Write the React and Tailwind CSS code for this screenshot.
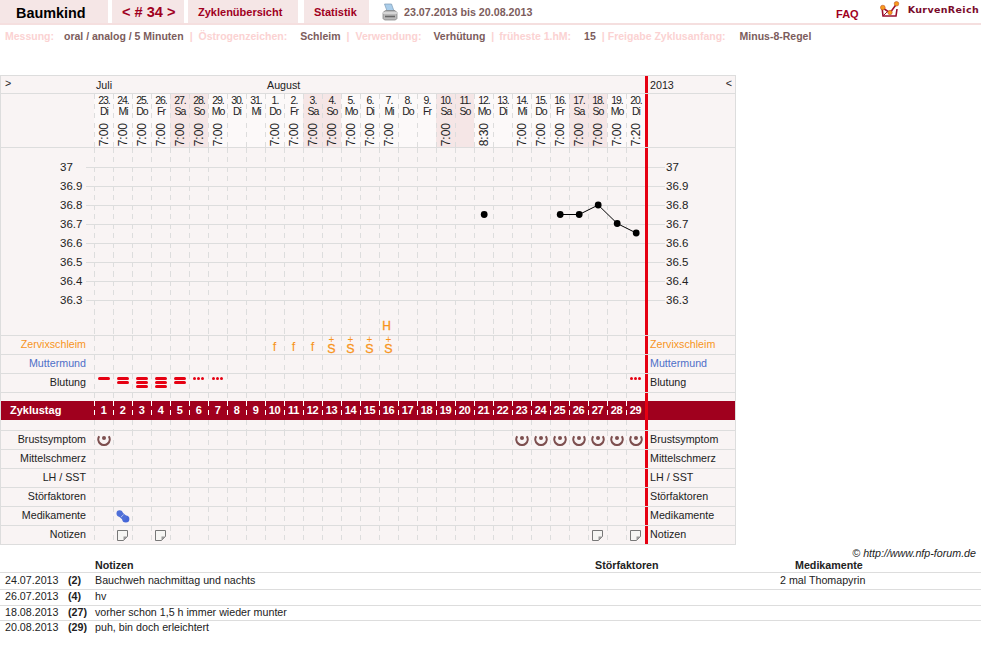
const DASH = "bg-[repeating-linear-gradient(to_bottom,#dddddd_0,#dddddd_5px,transparent_5px,transparent_9.5px)] bg-[length:1px_100%] bg-no-repeat";
const DASH_W = "bg-[repeating-linear-gradient(to_bottom,#ffffff_0,#ffffff_5px,transparent_5px,transparent_9.5px)] bg-[length:1px_100%] bg-no-repeat";

const days = [
  ["23.","Di","7:00"],["24.","Mi","7:00"],["25.","Do","7:00"],["26.","Fr","7:00"],["27.","Sa","7:00"],["28.","So","7:00"],["29.","Mo","7:00"],["30.","Di",""],["31.","Mi",""],
  ["1.","Do","7:00"],["2.","Fr","7:00"],["3.","Sa","7:00"],["4.","So","7:00"],["5.","Mo","7:00"],["6.","Di","7:00"],["7.","Mi","7:00"],["8.","Do",""],["9.","Fr",""],
  ["10.","Sa","7:00"],["11.","So",""],["12.","Mo","8:30"],["13.","Di",""],["14.","Mi","7:00"],["15.","Do","7:00"],["16.","Fr","7:00"],["17.","Sa","7:00"],["18.","So","7:00"],["19.","Mo","7:00"],["20.","Di","7:20"],
];
const temps = ["37","36.9","36.8","36.7","36.6","36.5","36.4","36.3"];
const cols = Array.from({ length: 29 }, (_, i) => i);

function Breast() {
  return (
    <svg width="14" height="11" viewBox="0 0 14 11">
      <path d="M2.2 1.2 A5.7 5.7 0 1 0 11.8 1.2" fill="none" stroke="#7d4f4f" strokeWidth="2.1" />
      <circle cx="7" cy="3" r="2" fill="#7d4f4f" />
    </svg>
  );
}
function Note() {
  return (
    <svg width="11" height="11" viewBox="0 0 11 11">
      <path d="M.5 .5H10.5V6.5L6.5 10.5H.5Z" fill="#f6f5f3" stroke="#777" />
      <path d="M10.5 6.5H6.5V10.5Z" fill="#999" />
    </svg>
  );
}
function Pill() {
  return (
    <svg width="14" height="13" viewBox="0 0 14 13">
      <circle cx="3.6" cy="3.4" r="3.1" fill="#4f6fd8" />
      <circle cx="9.8" cy="9" r="3.6" fill="#4566d8" />
      <path d="M3.6 3.4L9.8 9" stroke="#4f6fd8" strokeWidth="5.4" />
      <path d="M4.9 7.2L7.6 4.6" stroke="#c9d3f2" strokeWidth=".8" />
    </svg>
  );
}
function Bars({ n }) {
  return (
    <div className="flex flex-col items-center gap-px pt-[3px]">
      {Array.from({ length: n }, (_, i) => (
        <span key={i} className="w-[12px] h-[3px] rounded-full bg-[#e60012]" />
      ))}
    </div>
  );
}
function Dots() {
  return (
    <div className="flex justify-center gap-px pt-[3px]">
      <span className="w-[3px] h-[3px] rounded-full bg-[#e60012]" />
      <span className="w-[3px] h-[3px] rounded-full bg-[#e60012]" />
      <span className="w-[3px] h-[3px] rounded-full bg-[#e60012]" />
    </div>
  );
}
function Zervix({ v }) {
  if (v === "f") return <div className="text-center text-[13px] leading-[19px] pt-px text-[#f7941d]">f</div>;
  return (
    <div className="h-[18px] text-center text-[#f7941d]">
      <div className="text-[10px] leading-[6px] pt-[1px]">+</div>
      <div className="text-[12.5px] leading-[10px] pt-[1px] [-webkit-text-stroke:0.3px_#f7941d]">S</div>
    </div>
  );
}

function Row({ label, right, labelColor = "text-[#222]", cells = {}, height = "h-[19px]" }) {
  return (
    <div className={`flex ${height} border-b border-[#dddddd]`}>
      <div className={`w-[93px] shrink-0 text-right pr-[8px] text-[10.7px] leading-[16px] ${labelColor}`}>{label}</div>
      {cols.map((i) => (
        <div key={i} className={`w-[19px] shrink-0 ${DASH}`}>{cells[i + 1]}</div>
      ))}
      <div className="w-[3px] shrink-0 bg-[#e60012]" />
      <div className={`flex-1 pl-[2px] text-[10.7px] leading-[16px] ${labelColor}`}>{right}</div>
    </div>
  );
}

function Chart() {
  const pts = [[25, 214.5], [26, 214.5], [27, 205], [28, 223.5], [29, 233]];
  const px = (c) => 19 * (c - 1) + 10.2;
  const py = (y) => y - 148;
  return (
    <div className="flex h-[188px] border-b border-[#dddddd]">
      <div className="w-[93px] shrink-0 pt-[10px]">
        {temps.map((t) => (
          <div key={t} className="flex items-center h-[19px] pl-[59px] text-[11.5px] text-[#222]">
            <span className="w-[26px] shrink-0">{t}</span>
            <span className="flex-1 h-px bg-[#dddddd]" />
          </div>
        ))}
      </div>
      <div className="relative flex shrink-0">
        {cols.map((i) => (
          <div key={i} className={`w-[19px] h-full ${DASH}`} />
        ))}
        <svg className="absolute inset-0" width="551" height="187" viewBox="0 0 551 187">
          {temps.map((t, i) => (
            <line key={t} x1="0" x2="551" y1={19.5 + 19 * i} y2={19.5 + 19 * i} stroke="#dddddd" />
          ))}
          <polyline points={pts.map(([c, y]) => `${px(c)},${py(y)}`).join(" ")} fill="none" stroke="#000" strokeWidth="1" />
          {pts.map(([c, y]) => (
            <circle key={c} cx={px(c)} cy={py(y)} r="3.4" fill="#000" />
          ))}
          <circle cx={px(21)} cy={py(214.5)} r="3.4" fill="#000" />
          <text x="292.5" y="182" textAnchor="middle" fontSize="12" stroke="#f7941d" strokeWidth=".35" fill="#f7941d">H</text>
        </svg>
      </div>
      <div className="w-[3px] shrink-0 bg-[#e60012]" />
      <div className="flex-1 pt-[10px]">
        {temps.map((t) => (
          <div key={t} className="flex items-center h-[19px] text-[11.5px] text-[#222]">
            <span className="w-[17px] h-px bg-[#dddddd]" />
            <span className="flex-1 pl-px">{t}</span>
          </div>
        ))}
      </div>
    </div>
  );
}

function Printer() {
  return (
    <svg width="16" height="18" viewBox="0 0 16 18">
      <path d="M2.5 1H9.5L12 8H5Z" fill="#a9cdea" stroke="#7f9cb5" strokeWidth=".7" />
      <path d="M1 9.5L3.5 7.5H13L15 9.5V15.5L13.5 17H2.5L1 15.5Z" fill="#b9b9b9" stroke="#7c7c7c" strokeWidth=".7" />
      <path d="M1 10H15" stroke="#e2e2e2" strokeWidth="1.4" />
      <path d="M3 13.5H13" stroke="#666" strokeWidth="1.6" />
    </svg>
  );
}
function Logo() {
  return (
    <svg width="20" height="18" viewBox="0 0 20 18">
      <path d="M2 6L3 15H16L17 8" fill="none" stroke="#9a1030" strokeWidth="1.6" />
      <path d="M3 7L10 12L16.5 3" fill="none" stroke="#9a1030" strokeWidth="1.6" />
      <path d="M3 15L8 10" stroke="#9a1030" strokeWidth="1" />
      <circle cx="2.8" cy="6.6" r="2.4" fill="#f79a1d" stroke="#b5401a" strokeWidth=".5" />
      <circle cx="10" cy="11.5" r="2.2" fill="#f79a1d" stroke="#b5401a" strokeWidth=".5" />
      <circle cx="16.5" cy="2.8" r="2.3" fill="#f79a1d" stroke="#b5401a" strokeWidth=".5" />
    </svg>
  );
}

function Meta({ label, value, gap, labelGap = "", divider = true }) {
  return (
    <>
      <span className={`text-[#fbd2d2] ${labelGap}`}>{label}</span>
      <span className={`text-[#7c5c5c] ${gap}`}>{value}</span>
      {divider && <span className="text-[#fbd2d2] mx-[6px]">|</span>}
    </>
  );
}

const notes = [
  ["24.07.2013", "(2)", "Bauchweh nachmittag und nachts", "2 mal Thomapyrin", "h-[17px] leading-[15px]"],
  ["26.07.2013", "(4)", "hv", "", "h-[16px] leading-[13px]"],
  ["18.08.2013", "(27)", "vorher schon 1,5 h immer wieder munter", "", "h-[15px] leading-[13px]"],
  ["20.08.2013", "(29)", "puh, bin doch erleichtert", "", "h-[16px] leading-[13px] border-b-0"],
];

export default function App() {
  return (
    <div className="font-['Liberation_Sans',Arial,sans-serif] w-[981px] h-[664px] bg-white overflow-hidden">
      {/* top navigation */}
      <div className="flex h-[25px] border-b-2 border-[#f5dfdf]">
        <div className="w-[108px] bg-[#f5e6e6] pl-[16px] text-[14.4px] font-bold leading-[26px] text-black">Baumkind</div>
        <div className="ml-[4px] w-[72px] bg-[#f5e6e6] pl-[10px] text-[14.6px] font-bold leading-[24px] text-[#a0001e]">&lt; # 34 &gt;</div>
        <div className="ml-[4px] w-[110px] bg-[#f5e6e6] pl-[10px] text-[11px] font-bold leading-[25px] text-[#a0001e]">Zyklenübersicht</div>
        <div className="ml-[6px] w-[65px] bg-[#f5e6e6] pl-[10px] text-[11px] font-bold leading-[25px] text-[#a0001e]">Statistik</div>
        <div className="ml-[13px] pt-[3px]"><Printer /></div>
        <div className="ml-[6px] text-[10.7px] font-bold leading-[25px] text-[#7c5c5c]">23.07.2013 bis 20.08.2013</div>
        <div className="ml-auto text-[11px] font-bold leading-[29px] text-[#a0001e]">FAQ</div>
        <div className="ml-[21px] pt-[1px]"><Logo /></div>
        <div className="ml-[8px] mr-[2px] font-['DejaVu_Sans',sans-serif] text-[9.5px] font-bold leading-[20px] tracking-[0.35px] text-[#7a0c2c]">KurvenReich</div>
      </div>

      {/* settings line */}
      <div className="flex pl-[5px] text-[10.5px] font-bold leading-[22px] h-[50px]">
        <Meta label="Messung:" value="oral / analog / 5 Minuten" gap="ml-[10px]" />
        <Meta label="Östrogenzeichen:" value="Schleim" gap="ml-[13px]" />
        <Meta label="Verwendung:" value="Verhütung" gap="ml-[12px]" />
        <Meta label="früheste 1.hM:" value="15" gap="ml-[13px]" labelGap="ml-[-1px]" />
        <Meta label="Freigabe Zyklusanfang:" value="Minus-8-Regel" gap="ml-[14px]" labelGap="ml-[-3px]" divider={false} />
      </div>

      {/* cycle table */}
      <div className="w-[736px] border-x border-t border-[#dddddd] bg-[#f9f4f4]">
        <div className="flex h-[18px] border-b border-[#dddddd] text-[10.7px] leading-[18px] text-[#222]">
          <div className="w-[93px] shrink-0 pl-[4px] leading-[14px]">&gt;</div>
          <div className="w-[173px] shrink-0 pl-[2px]">Juli</div>
          <div className="w-[378px] shrink-0">August</div>
          <div className="w-[3px] shrink-0 bg-[#e60012]" />
          <div className="flex flex-1 justify-between pl-[2px] pr-[3px]"><span>2013</span><span className="leading-[14px]">&lt;</span></div>
        </div>

        <div className="flex h-[54px] border-b border-[#dddddd] text-[#222]">
          <div className="w-[93px] shrink-0" />
          {days.map(([d, w, t], i) => (
            <div key={i} className={`w-[19px] shrink-0 flex flex-col items-center pl-px ${DASH} ${w === "Sa" || w === "So" ? "bg-[#f5e6e6]" : "bg-[#fcf9f9]"}`}>
              <div className="pt-[1px] text-[10.5px] leading-[11px] tracking-[-1px] text-center">{d}<br />{w}</div>
              {t && <div className="mt-[6px] [writing-mode:vertical-rl] rotate-180 text-[12px] leading-[12px]">{t}</div>}
            </div>
          ))}
          <div className="w-[3px] shrink-0 bg-[#e60012]" />
          <div className="flex-1" />
        </div>

        <Chart />

        <Row label="Zervixschleim" right="Zervixschleim" labelColor="text-[#f7941d]"
          cells={{ 10: <Zervix v="f" />, 11: <Zervix v="f" />, 12: <Zervix v="f" />, 13: <Zervix v="s" />, 14: <Zervix v="s" />, 15: <Zervix v="s" />, 16: <Zervix v="s" /> }} />
        <Row label="Muttermund" right="Muttermund" labelColor="text-[#4f6fc8]" />
        <Row label="Blutung" right="Blutung"
          cells={{ 1: <Bars n={1} />, 2: <Bars n={2} />, 3: <Bars n={3} />, 4: <Bars n={3} />, 5: <Bars n={2} />, 6: <Dots />, 7: <Dots />, 29: <Dots /> }} />
        <Row label="" right="" height="h-[8px] border-b-0" />

        <div className="flex h-[19px] bg-[#a0001e] text-white text-[11px] font-bold leading-[19px]">
          <div className="w-[93px] shrink-0 pl-[9px]">Zyklustag</div>
          {cols.map((i) => (
            <div key={i} className={`w-[19px] shrink-0 text-center tracking-[-0.4px] ${DASH_W}`}>{i + 1}</div>
          ))}
          <div className="w-[3px] shrink-0 bg-[#e60012]" />
          <div className="flex-1" />
        </div>

        <Row label="" right="" height="h-[11px]" />
        <Row label="Brustsymptom" right="Brustsymptom"
          cells={Object.fromEntries([1, 23, 24, 25, 26, 27, 28, 29].map((c) => [c, <div key={c} className="flex justify-center pt-[4px]"><Breast /></div>]))} />
        <Row label="Mittelschmerz" right="Mittelschmerz" />
        <Row label="LH / SST" right="LH / SST" />
        <Row label="Störfaktoren" right="Störfaktoren" />
        <Row label="Medikamente" right="Medikamente" cells={{ 2: <div className="flex justify-center pt-[3px]"><Pill /></div> }} />
        <Row label="Notizen" right="Notizen"
          cells={Object.fromEntries([2, 4, 27, 29].map((c) => [c, <div key={c} className="flex justify-center pt-[4px]"><Note /></div>]))} />
      </div>

      {/* copyright */}
      <div className="h-[14px] pt-px pr-[5px] text-right text-[10.7px] italic leading-[14px] text-[#222]">© http://www.nfp-forum.de</div>

      {/* notes table */}
      <div className="text-[10.7px] text-[#222]">
        <div className="flex h-[14px] border-b border-[#dddddd] font-bold leading-[13px]">
          <div className="w-[95px] shrink-0" />
          <div className="w-[500px] shrink-0">Notizen</div>
          <div className="w-[200px] shrink-0">Störfaktoren</div>
          <div>Medikamente</div>
        </div>
        {notes.map(([date, day, text, med, h]) => (
          <div key={date} className={`flex ${h} border-b border-[#dddddd]`}>
            <div className="w-[68px] shrink-0 pl-[5px]">{date}</div>
            <div className="w-[27px] shrink-0 font-bold">{day}</div>
            <div className="w-[685px] shrink-0">{text}</div>
            <div>{med}</div>
          </div>
        ))}
      </div>
    </div>
  );
}
